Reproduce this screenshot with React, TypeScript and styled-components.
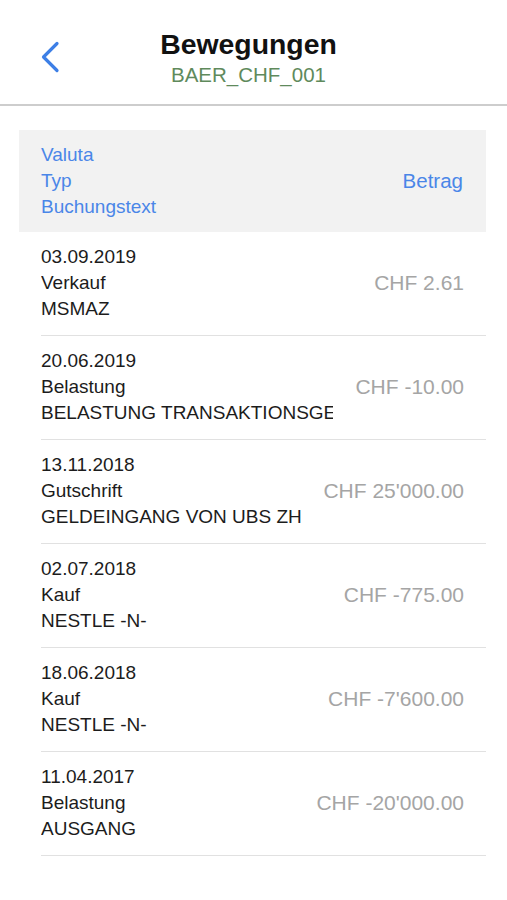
import { FC, JSX } from 'react';
import styled, { createGlobalStyle } from 'styled-components';

const GlobalStyle = createGlobalStyle`
  body {
    margin: 0;
    background: #ffffff;
    font-family: 'Liberation Sans', Arial, sans-serif;
  }
`;

const Page = styled.div`
  width: 507px;
  min-height: 900px;
  background: #ffffff;
`;

const NavBar = styled.header`
  position: relative;
  height: 106px;
  box-sizing: border-box;
  padding-top: 28px;
  display: flex;
  flex-direction: column;
  align-items: center;
  border-bottom: 2px solid #cdcdcd;
  padding-right: 10px;
`;

const BackButton = styled.button`
  position: absolute;
  left: 36px;
  top: 38px;
  width: 28px;
  height: 38px;
  padding: 0;
  border: none;
  background: none;
  display: flex;
  align-items: center;
  justify-content: center;
`;

const Title = styled.h1`
  margin: 0;
  font-size: 28.4px;
  line-height: 32px;
  font-weight: bold;
  color: #111111;
`;

const Subtitle = styled.div`
  margin-top: 3px;
  font-size: 20.5px;
  line-height: 24px;
  color: #5f8a5c;
`;

const Table = styled.section`
  margin: 24px 21px 0 19px;
`;

const HeadRow = styled.div`
  display: flex;
  align-items: center;
  justify-content: space-between;
  background: #f2f2f2;
  padding: 12px 23px 12px 22px;
  color: #4a86e8;
  font-size: 19px;
  line-height: 26px;
`;

const Cell = styled.div<{ $align?: 'left' | 'right' }>`
  text-align: ${p => p.$align ?? 'left'};
  font-size: ${p => (p.$align === 'right' ? '20.5px' : '19px')};
`;

const Row = styled.div`
  display: flex;
  align-items: center;
  justify-content: space-between;
  margin-left: 22px;
  padding: 12px 22px 13px 0;
  border-bottom: 1px solid #e1e1e1;
`;

const Info = styled.div`
  width: 292px;
  overflow: hidden;
  white-space: nowrap;
  font-size: 19px;
  line-height: 26px;
  color: #1c1c1c;
`;

const Amount = styled.div`
  font-size: 21px;
  color: #a5a5a5;
  white-space: nowrap;
`;

interface IMovement {
  date: string;
  type: string;
  text: string;
  amount: string;
}

const movements: IMovement[] = [
  {date: '03.09.2019', type: 'Verkauf', text: 'MSMAZ', amount: 'CHF 2.61'},
  {date: '20.06.2019', type: 'Belastung', text: 'BELASTUNG TRANSAKTIONSGEBÜHR', amount: 'CHF -10.00'},
  {date: '13.11.2018', type: 'Gutschrift', text: 'GELDEINGANG VON UBS ZH', amount: 'CHF 25\'000.00'},
  {date: '02.07.2018', type: 'Kauf', text: 'NESTLE -N-', amount: 'CHF -775.00'},
  {date: '18.06.2018', type: 'Kauf', text: 'NESTLE -N-', amount: 'CHF -7\'600.00'},
  {date: '11.04.2017', type: 'Belastung', text: 'AUSGANG', amount: 'CHF -20\'000.00'},
];

const App: FC = (): JSX.Element => {
  return (
    <Page>
      <GlobalStyle/>
      <NavBar>
        <BackButton aria-label={'Zurück'}>
          <svg width="20" height="32" viewBox="0 0 20 32" fill="none">
            <path d="M17 2.5 L3.5 16 L17 29.5" stroke="#3d7fe6" strokeWidth="3.2"
                  strokeLinecap="round" strokeLinejoin="round"/>
          </svg>
        </BackButton>
        <Title>Bewegungen</Title>
        <Subtitle>BAER_CHF_001</Subtitle>
      </NavBar>
      <Table>
        <HeadRow>
          <Cell>
            <div>Valuta</div>
            <div>Typ</div>
            <div>Buchungstext</div>
          </Cell>
          <Cell $align={'right'}>Betrag</Cell>
        </HeadRow>
        {movements.map((m, i) => (
          <Row key={i}>
            <Info>
              <div>{m.date}</div>
              <div>{m.type}</div>
              <div>{m.text}</div>
            </Info>
            <Amount>{m.amount}</Amount>
          </Row>
        ))}
      </Table>
    </Page>
  );
};

export default App;
